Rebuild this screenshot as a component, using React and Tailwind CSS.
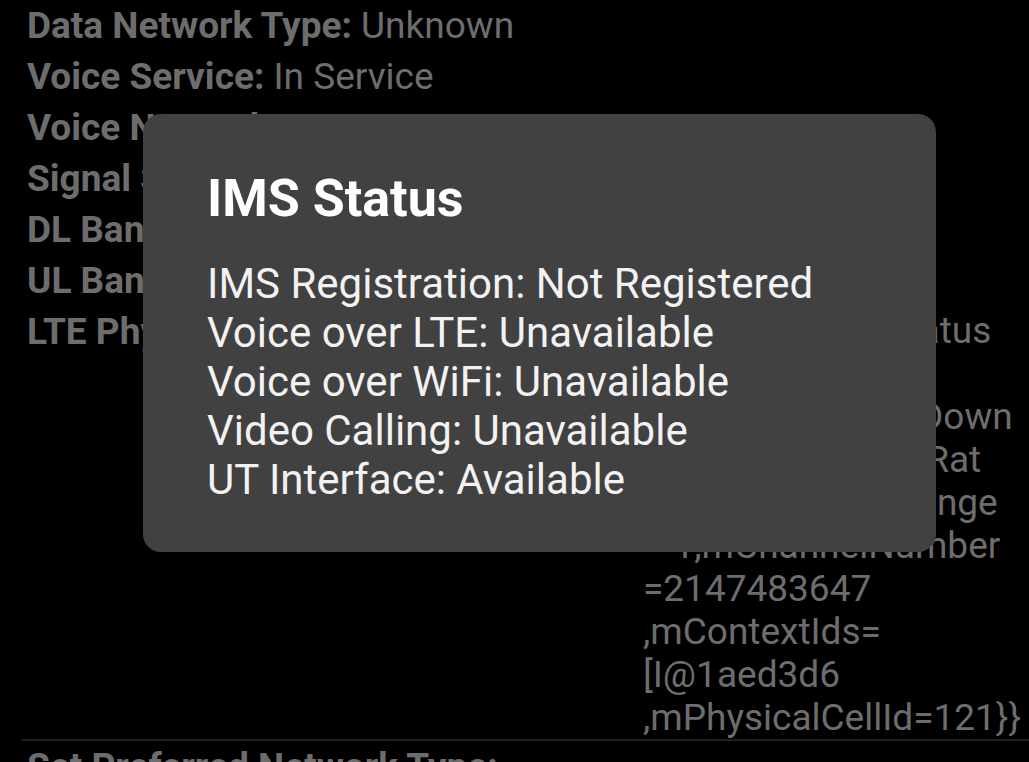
export default function App() {
  const rows = [
    ['Data Network Type:', 'Unknown'],
    ['Voice Service:', 'In Service'],
    ['Voice Network Type:', 'LTE'],
    ['Signal Strength:', '-101 dBm   39 asu'],
    ['DL Bandwidth (kbps):', '15000'],
    ['UL Bandwidth (kbps):', '15000'],
  ]

  const config = [
    '[{mConnectionStatus',
    '=PrimaryServing',
    ',mCellBandwidthDown',
    'linkKhz=20000,mRat',
    '=3,mFrequencyRange',
    '=-1,mChannelNumber',
    '=2147483647',
    ',mContextIds=',
    '[I@1aed3d6',
    ',mPhysicalCellId=121}}',
  ]

  const ims = [
    'IMS Registration: Not Registered',
    'Voice over LTE: Unavailable',
    'Voice over WiFi: Unavailable',
    'Video Calling: Unavailable',
    'UT Interface: Available',
  ]

  return (
    <div className="relative w-[1029px] h-[762px] overflow-hidden bg-black font-['Roboto','Liberation_Sans',sans-serif] text-[#6d6d6d]">
      <div className="pl-[27px]">
        {rows.map(([label, value]) => (
          <div key={label} className="text-[37px] leading-[51px] whitespace-nowrap">
            <span className="font-bold">{label}</span> {value}
          </div>
        ))}
        <div className="flex">
          <div className="w-[616px] shrink-0 text-[37px] leading-[51px] font-bold whitespace-nowrap">
            LTE Physical Channel Config:
          </div>
          <div className="pt-[3px] text-[37px] leading-[43px] whitespace-nowrap">
            {config.map((line) => (
              <div key={line}>{line}</div>
            ))}
          </div>
        </div>
      </div>

      <div className="ml-[22px] h-[2px] bg-[#1e1e1e]" />
      <div className="pl-[27px] text-[37px] leading-[51px] font-bold whitespace-nowrap">
        Set Preferred Network Type:
      </div>

      <div className="absolute left-[143px] top-[114px] w-[793px] h-[438px] rounded-[18px] bg-[#414141] pl-[64px] pt-[57px] text-[#f2f2f2]">
        <div className="text-[52px] leading-[56px] font-bold text-white">IMS Status</div>
        <div className="mt-[32px] text-[42px] leading-[49px]">
          {ims.map((line) => (
            <div key={line}>{line}</div>
          ))}
        </div>
      </div>
    </div>
  )
}
